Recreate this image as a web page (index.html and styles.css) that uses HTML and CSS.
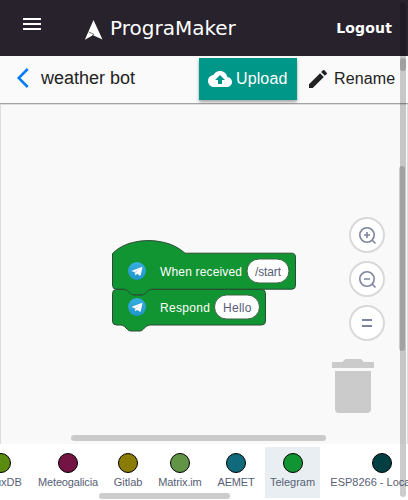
FILE: index.html
```html
<!DOCTYPE html>
<html lang="en">
<head>
<meta charset="utf-8">
<title>PrograMaker</title>
<link rel="stylesheet" href="styles.css">
</head>
<body>
<header class="topbar">
  <svg class="menu" width="18" height="12" viewBox="0 0 18 12"><path fill="#fff" d="M0 0h18v2H0zM0 5h18v2H0zM0 10h18v2H0z"/></svg>
  <svg class="logo" width="20" height="22" viewBox="0 0 20 22"><path fill="#fff" d="M9.500 1 .8 20.800 9 16.300 18.500 20.500z"/><path d="M4.500 12.800 10 15.500 7.500 17.200" fill="none" stroke="#28222d" stroke-width=".6"/></svg>
  <span class="brand">PrograMaker</span>
  <span class="logout">Logout</span>
</header>
<div class="toolbar">
  <svg class="back" width="12" height="20" viewBox="0 0 12 20"><path d="M10.700 1 1.700 10l9 9" fill="none" stroke="#007bff" stroke-width="2.500"/></svg>
  <h1 class="title">weather bot</h1>
  <button class="upload"><svg width="24" height="24" viewBox="0 0 24 24"><path fill="#fff" d="M19.350 10.040C18.670 6.590 15.640 4 12 4 9.110 4 6.600 5.640 5.350 8.040 2.340 8.360 0 10.910 0 14c0 3.310 2.690 6 6 6h13c2.760 0 5-2.240 5-5 0-2.640-2.050-4.780-4.650-4.960z"/><path fill="#009688" d="M14 13v4h-4v-4H7l5-5 5 5z"/></svg><span>Upload</span></button>
  <button class="rename"><svg width="24" height="24" viewBox="0 0 24 24"><path fill="#222" d="M3 17.250V21h3.750L17.810 9.940l-3.750-3.750L3 17.250zM20.710 7.040c.39-.39.39-1.020 0-1.410l-2.340-2.340c-.39-.39-1.020-.39-1.410 0l-1.830 1.830 3.750 3.750 1.830-1.830z"/></svg><span>Rename</span></button>
</div>
<main class="workspace">
  <svg class="canvas" width="407" height="340" viewBox="0 104 407 340">
    <defs>
      <linearGradient id="sky" x1="0" y1="0" x2="0" y2="1"><stop offset="0" stop-color="#37aee2"/><stop offset="1" stop-color="#1e96c8"/></linearGradient>
      <g id="telegram"><circle r="9" fill="url(#sky)"/><path fill="#fff" d="M-5.200-.2 4.700-3.900Q5.500-4 5.300-3.100L3.700 4.300Q3.400 5.100 2.600 4.600L.2 2.800-1.100 4.100Q-1.700 4.400-1.800 3.700L-2.400 1.100-5.100.3Q-5.600.1-5.200-.2z"/><path d="M-2.300 1.100 3.500-2.600-1.100 1.800-1.400 3.900z" fill="#c8daea"/></g>
    </defs>
    <g fill="#119432" stroke="#2c4a35" stroke-width="1">
      <path d="M112.500 293.500q0-4 4-4h8q2 0 4 1.500l2 2q2 2 4 2h7q2 0 4-2l2-2q2-1.500 4-1.500h110q4 0 4 4v27.500q0 4-4 4H150q-2 0-4 1.500l-3 3q-1.500 1.500-3 1.500h-9q-2 0-3.500-1.500l-3-3q-2-1.500-3.500-1.500h-4.500q-4 0-4-4z"/>
      <path d="M112.500 253.500q8-8 20-11 16-4 32 0 12 3 20.500 10.700H292q3.500 0 3.500 4v28q0 4-3.500 4H152q-2 0-4 1.500l-3 3q-1.500 1-3 1h-8q-2 0-3.500-1l-3-3q-2-1.500-3.500-1.500h-7.500q-4 0-4-4z"/>
    </g>
    <g fill="#fff" stroke="#3f6446"><rect x="247" y="259" width="42" height="24" rx="12"/><rect x="214.500" y="295" width="45" height="24" rx="12"/></g>
    <use href="#telegram" x="137" y="271"/><use href="#telegram" x="137" y="307"/>
    <g class="label">
      <text x="160" y="276" textLength="82">When received</text><text x="160" y="312" textLength="50">Respond</text>
      <text class="value" x="255" y="276" textLength="26">/start</text><text class="value" x="223" y="312" textLength="28.500">Hello</text>
    </g>
    <g fill="#fff" stroke="#d9d9d9" stroke-width="2"><circle cx="367" cy="235" r="17"/><circle cx="367" cy="279" r="17"/><circle cx="367" cy="323" r="17"/></g>
    <g fill="none" stroke="#7d849d" stroke-width="1.600">
      <circle cx="367" cy="235" r="7.200"/><path d="m372 240 3.500 3.500M364 235h6M367 232v6"/>
      <circle cx="367" cy="279" r="7.200"/><path d="m372 284 3.500 3.500M364 279h6"/>
      <path stroke-width="2" d="M362 320h10M362 326h10"/>
    </g>
    <path fill="#cbcbcb" d="M332 368v-6h10.500l3-3H361l3 3h10v6zM335 371h36v38q0 4-4 4h-28q-4 0-4-4z"/>
    <rect x="71" y="435" width="255" height="6" rx="3" fill="#cbcbcb"/>
  </svg>
</main>
<nav class="toolbox">
  <div class="item influx"><i></i><span>InfluxDB</span></div>
  <div class="item meteo"><i></i><span>Meteogalicia</span></div>
  <div class="item gitlab"><i></i><span>Gitlab</span></div>
  <div class="item matrix"><i></i><span>Matrix.im</span></div>
  <div class="item aemet"><i></i><span>AEMET</span></div>
  <div class="item tg"><i></i><span>Telegram</span></div>
  <div class="item esp"><i></i><span>ESP8266 - Localhost</span></div>
</nav>
<div class="thumb category-thumb"></div>
<div class="thumb canvas-thumb"></div>
<div class="thumb page-thumb"></div>
<div class="thumb top-thumb"></div>
</body>
</html>
```
FILE: styles.css
```css
* { box-sizing: border-box; }
body { margin: 0; width: 408px; height: 500px; overflow: hidden; position: relative; display: flex; flex-direction: column; background: #fafafa; font-family: "Liberation Sans", sans-serif; color: #222; }
.topbar { height: 56px; flex: none; background: #28222d; color: #fff; display: flex; align-items: center; padding: 0 16px 0 23px; font-family: "DejaVu Sans", sans-serif; }
.menu { margin-top: -8px; }
.logo { margin: 3px 0 0 43px; }
.brand { margin-left: 6px; font-size: 20px; line-height: 24px; }
.logout { margin-left: auto; font-size: 14px; font-weight: bold; letter-spacing: .15px; }
.toolbar { height: 48px; flex: none; display: flex; padding: 2px 0 0 17px; border-bottom: 1px solid #a5a5a5; }
.back { margin-top: 10px; }
.title { margin: 0 0 0 12px; width: 158px; font-size: 18px; font-weight: normal; line-height: 40px; white-space: nowrap; }
.toolbar button { border: 0; font: 16px/42px "Liberation Sans", sans-serif; height: 42px; display: flex; align-items: center; letter-spacing: .12px; }
.toolbar button svg { flex: none; }
.upload { width: 98px; padding: 0 0 0 9px; gap: 4px; background: #009688; color: #fff; box-shadow: 0 2px 3px rgba(0,0,0,.35); }
.rename { padding: 0 0 0 9px; gap: 4px; background: transparent; color: #222; }
.workspace { height: 340px; flex: none; border: solid #ddd; border-width: 1px 1px 0; background: #f9f9f9; overflow: hidden; }
.canvas { display: block; margin: -1px 0 0 -1px; }
.label { font-size: 12px; fill: #fff; }
.value { fill: #575e75; }
.toolbox { height: 56px; flex: none; background: #fff; display: flex; gap: 6px; padding-top: 3px; overflow: hidden; }
.item { flex: none; height: 51px; padding-top: 6px; display: flex; flex-direction: column; align-items: center; font-size: 11px; line-height: 18px; color: #575e75; white-space: nowrap; }
.item i { width: 20px; height: 20px; border: 1px solid #000; border-radius: 50%; flex: none; }
.influx { width: 52px; margin-left: -25px; }
.influx i { background: #5b8c12; }
.meteo { width: 70px; letter-spacing: -.15px; }
.meteo i { background: #731444; }
.gitlab { width: 38px; }
.gitlab i { background: #8a7c05; }
.matrix { width: 54px; letter-spacing: -.15px; }
.matrix i { background: #629445; }
.aemet { width: 46px; letter-spacing: -.2px; }
.aemet i { background: #106a7b; }
.tg { width: 55px; background: #e9eef2; }
.tg i { background: #119432; }
.esp { width: 112px; }
.esp i { background: #023f43; }
.thumb { position: absolute; border-radius: 3px; background: rgba(0,0,0,.2); }
.category-thumb { left: 99px; top: 493px; width: 131px; height: 6px; }
.canvas-thumb { left: 399px; top: 166px; width: 6px; height: 185px; background: #cbcbcb; }
.page-thumb { left: 400px; top: 2px; width: 6px; height: 495px; }
.top-thumb { left: 400px; top: 58px; width: 6px; height: 13px; }
```
